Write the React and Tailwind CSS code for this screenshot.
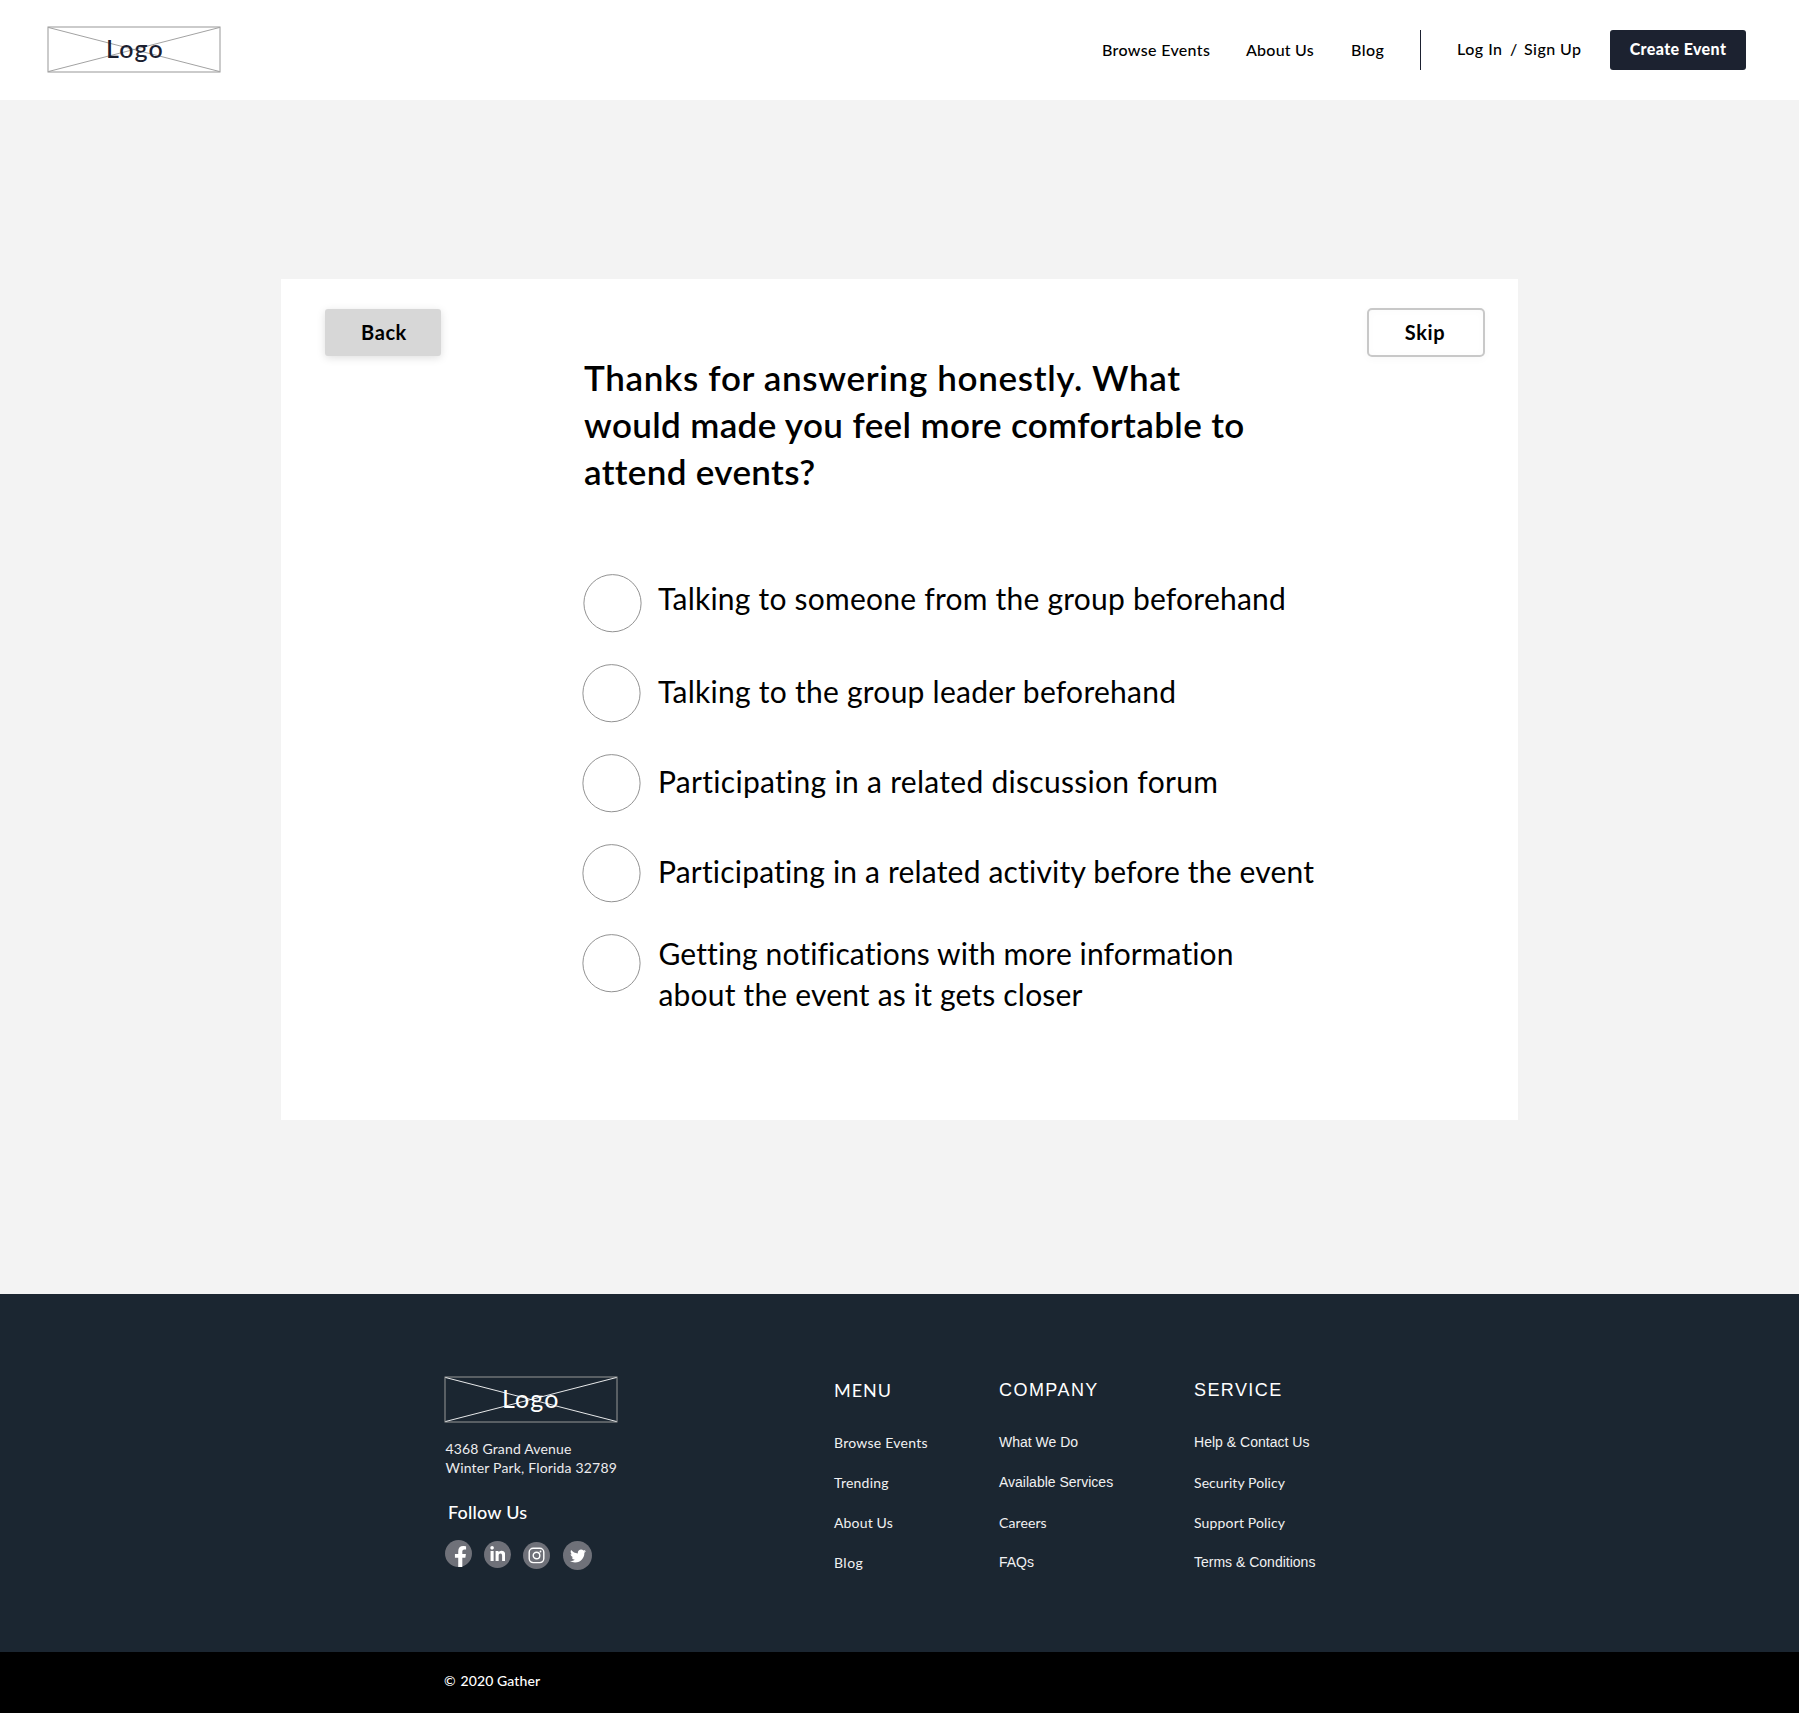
import React from "react";
import { FaFacebookF, FaLinkedinIn, FaTwitter } from "react-icons/fa";

const LATO = "font-[Lato,'Noto_Sans',sans-serif]";
const ARIAL = "font-['Liberation_Sans',Arial,sans-serif]";

function Logo({ frame, cross, text }) {
  return (
    <div className="relative h-[47px] w-[174px] shrink-0">
      <svg className="block" width="174" height="47" viewBox="0 0 174 47" fill="none">
        <rect x="1" y="1" width="172" height="45" stroke={frame} />
        <path d="M1.5 1.5L172.5 45.5M1.5 45.5L172.5 1.5" stroke={cross} strokeWidth="0.9" />
      </svg>
      <span className={"absolute top-[6px] text-[25px] leading-[33px] tracking-[1.15px] " + text}>
        Logo
      </span>
    </div>
  );
}

function Header() {
  return (
    <header className="flex h-[100px] items-center bg-white pl-[47px] pr-[53px] text-base leading-6 font-medium">
      <div className="pb-px">
        <Logo frame="#979797" cross="#979797" text="left-[59px] text-[#1b2030]" />
      </div>
      <nav className="ml-auto flex items-center">
        <a className="w-[144px] tracking-[0.34px]">Browse Events</a>
        <a className="w-[105px] tracking-[0.23px]">About Us</a>
        <a className="w-[69px] tracking-[0.46px]">Blog</a>
        <span className="h-10 w-px bg-[#1b2030]" />
        <div className="flex w-[189px] pb-0.5 pl-9">
          <a className="w-[53px] tracking-[0.5px]">Log In</a>
          <span className="w-[14px]">/</span>
          <a className="tracking-[0.43px]">Sign Up</a>
        </div>
        <button className="h-10 w-[136px] rounded-[3px] bg-[#1c2230] pb-0.5 font-black tracking-[0.37px] text-white">
          Create Event
        </button>
      </nav>
    </header>
  );
}

const options = [
  {
    circle: "ml-px",
    label: "mt-1 ml-4",
    lines: [["Talking to someone from the group beforehand", "tracking-[0.226px]"]],
  },
  { circle: "", label: "mt-[7px] ml-[17px]", lines: [["Talking to the group leader beforehand", "tracking-[0.255px]"]] },
  { circle: "", label: "mt-[7px] ml-[17px]", lines: [["Participating in a related discussion forum", "tracking-[0.295px]"]] },
  { circle: "", label: "mt-[7px] ml-[17px]", lines: [["Participating in a related activity before the event", "tracking-[0.185px]"]] },
  {
    circle: "",
    label: "-mt-px ml-[17.5px]",
    lines: [
      ["Getting notifications with more information", "tracking-[0.11px]"],
      ["about the event as it gets closer", "tracking-[0.18px]"],
    ],
  },
];

function QuestionCard() {
  return (
    <section className="mx-auto flex h-[841px] w-[1237px] items-start bg-white pl-11">
      <button className="mt-[30px] h-[47px] w-[116px] shrink-0 rounded-[3px] bg-[#d7d7d7] pb-px pl-[2px] text-xl font-bold tracking-[0.57px] shadow-[0_2px_8px_rgba(0,0,0,0.13)]">
        Back
      </button>
      <div className="mt-[75px] ml-[141px] w-[785px] shrink-0">
        <h1 className="pl-[2px] text-[35px] leading-[47px] font-semibold">
          <span className="block tracking-[0.665px]">Thanks for answering honestly. What</span>
          <span className="block tracking-[0.36px]">would made you feel more comfortable to</span>
          <span className="block tracking-[0.33px]">attend events?</span>
        </h1>
        <ul className="mt-[79px]">
          {options.map((option) => (
            <li key={option.lines[0][0]} className="flex h-[90px] items-start">
              <svg className={"block shrink-0 " + option.circle} width="59" height="59" viewBox="0 0 59 59" fill="none">
                <circle cx="29.5" cy="29.2" r="28.6" stroke="#8c8c8c" strokeWidth="0.95" />
              </svg>
              <p className={"text-[30px] leading-[41px] whitespace-nowrap " + option.label}>
                {option.lines.map(([line, tracking]) => (
                  <span key={line} className={"block " + tracking}>
                    {line}
                  </span>
                ))}
              </p>
            </li>
          ))}
        </ul>
      </div>
      <button className="mt-[29px] h-[49px] w-[118px] shrink-0 rounded-[5px] border-2 border-[#c8c8c8] bg-white pr-[2px] pb-px text-xl font-bold tracking-[0.63px] shadow-[0_2px_8px_rgba(0,0,0,0.03),inset_0_1px_8px_rgba(0,0,0,0.02)]">
        Skip
      </button>
    </section>
  );
}

const columns = [
  {
    title: ["MENU", LATO + " tracking-[0.95px]"],
    links: [
      ["Browse Events", LATO + " pt-px tracking-[0.256px]"],
      ["Trending", LATO + " pt-px tracking-[0.22px]"],
      ["About Us", LATO + " pt-px tracking-[0.15px]"],
      ["Blog", LATO + " pt-px tracking-[0.461px]"],
    ],
  },
  {
    title: ["COMPANY", ARIAL + " tracking-[1.45px]"],
    links: [
      ["What We Do", ARIAL],
      ["Available Services", ARIAL],
      ["Careers", LATO + " pt-px tracking-[0.1px]"],
      ["FAQs", ARIAL],
    ],
  },
  {
    title: ["SERVICE", ARIAL + " tracking-[1.42px]"],
    links: [
      ["Help & Contact Us", ARIAL + " tracking-[0.02px]"],
      ["Security Policy", LATO + " pt-px tracking-[0.08px]"],
      ["Support Policy", LATO + " pt-px tracking-[0.15px]"],
      ["Terms & Conditions", ARIAL],
    ],
  },
];

function Social() {
  return (
    <div className="mt-4 ml-px flex items-start text-white">
      <span className="flex h-[27px] w-[27px] items-end justify-center rounded-full bg-[#6f7179] pl-1">
        <FaFacebookF className="block h-[21px] w-[13px]" />
      </span>
      <span className="mt-px ml-3 flex h-[27px] w-[27px] items-center justify-center rounded-full bg-[#6f7179] pb-px">
        <FaLinkedinIn className="block h-[17px] w-[15.5px]" />
      </span>
      <span className="mt-0.5 ml-3 flex h-[27px] w-[27px] items-center justify-center rounded-full bg-[#6f7179]">
        <svg className="block" width="17" height="17" viewBox="0 0 17 17" fill="none" stroke="currentColor" strokeWidth="1.4">
          <rect x="1.2" y="1.2" width="14.6" height="14.4" rx="4" />
          <circle cx="8.5" cy="8.5" r="3.3" />
          <circle cx="12.5" cy="4.5" r="0.9" fill="currentColor" stroke="none" />
        </svg>
      </span>
      <span className="mt-px ml-[13px] flex h-[29px] w-[29px] items-center justify-center rounded-full bg-[#6f7179] pl-px">
        <FaTwitter className="block h-4 w-4" />
      </span>
    </div>
  );
}

function Footer() {
  return (
    <footer>
      <div className="grid h-[358px] grid-cols-[390px_165px_195px_200px] items-start bg-[#1b2631] pt-[82px] pl-[444px] text-white">
        <div>
          <Logo frame="#979797" cross="#ffffff" text="left-[58px] text-white" />
          <address className="mt-4 pl-[1.5px] text-sm leading-[19px] text-[#ececee] not-italic">
            <span className="block tracking-[0.168px]">4368 Grand Avenue</span>
            <span className="block tracking-[0.178px]">Winter Park, Florida 32789</span>
          </address>
          <p className="mt-[23px] pl-1 text-lg leading-6 font-medium tracking-[0.2px]">Follow Us</p>
          <Social />
        </div>
        {columns.map((column) => (
          <div key={column.title[0]} className="pt-0.5">
            <h2 className={"text-lg leading-6 " + column.title[1]}>{column.title[0]}</h2>
            <ul className="mt-[30px] text-sm leading-5 text-[#f1f1f2]">
              {column.links.map(([label, style]) => (
                <li key={label} className={"h-10 " + style}>
                  {label}
                </li>
              ))}
            </ul>
          </div>
        ))}
      </div>
      <div className="flex h-[61px] bg-black pt-[19px] pl-[444px] text-sm leading-5 font-medium text-white">
        <span className="w-[16.5px]">©</span>
        <span className="tracking-[0.1px]">2020 Gather</span>
      </div>
    </footer>
  );
}

export default function App() {
  return (
    <div className={"w-[1799px] bg-[#f3f3f3] text-black " + LATO}>
      <Header />
      <main className="pt-[179px] pb-[174px]">
        <QuestionCard />
      </main>
      <Footer />
    </div>
  );
}
